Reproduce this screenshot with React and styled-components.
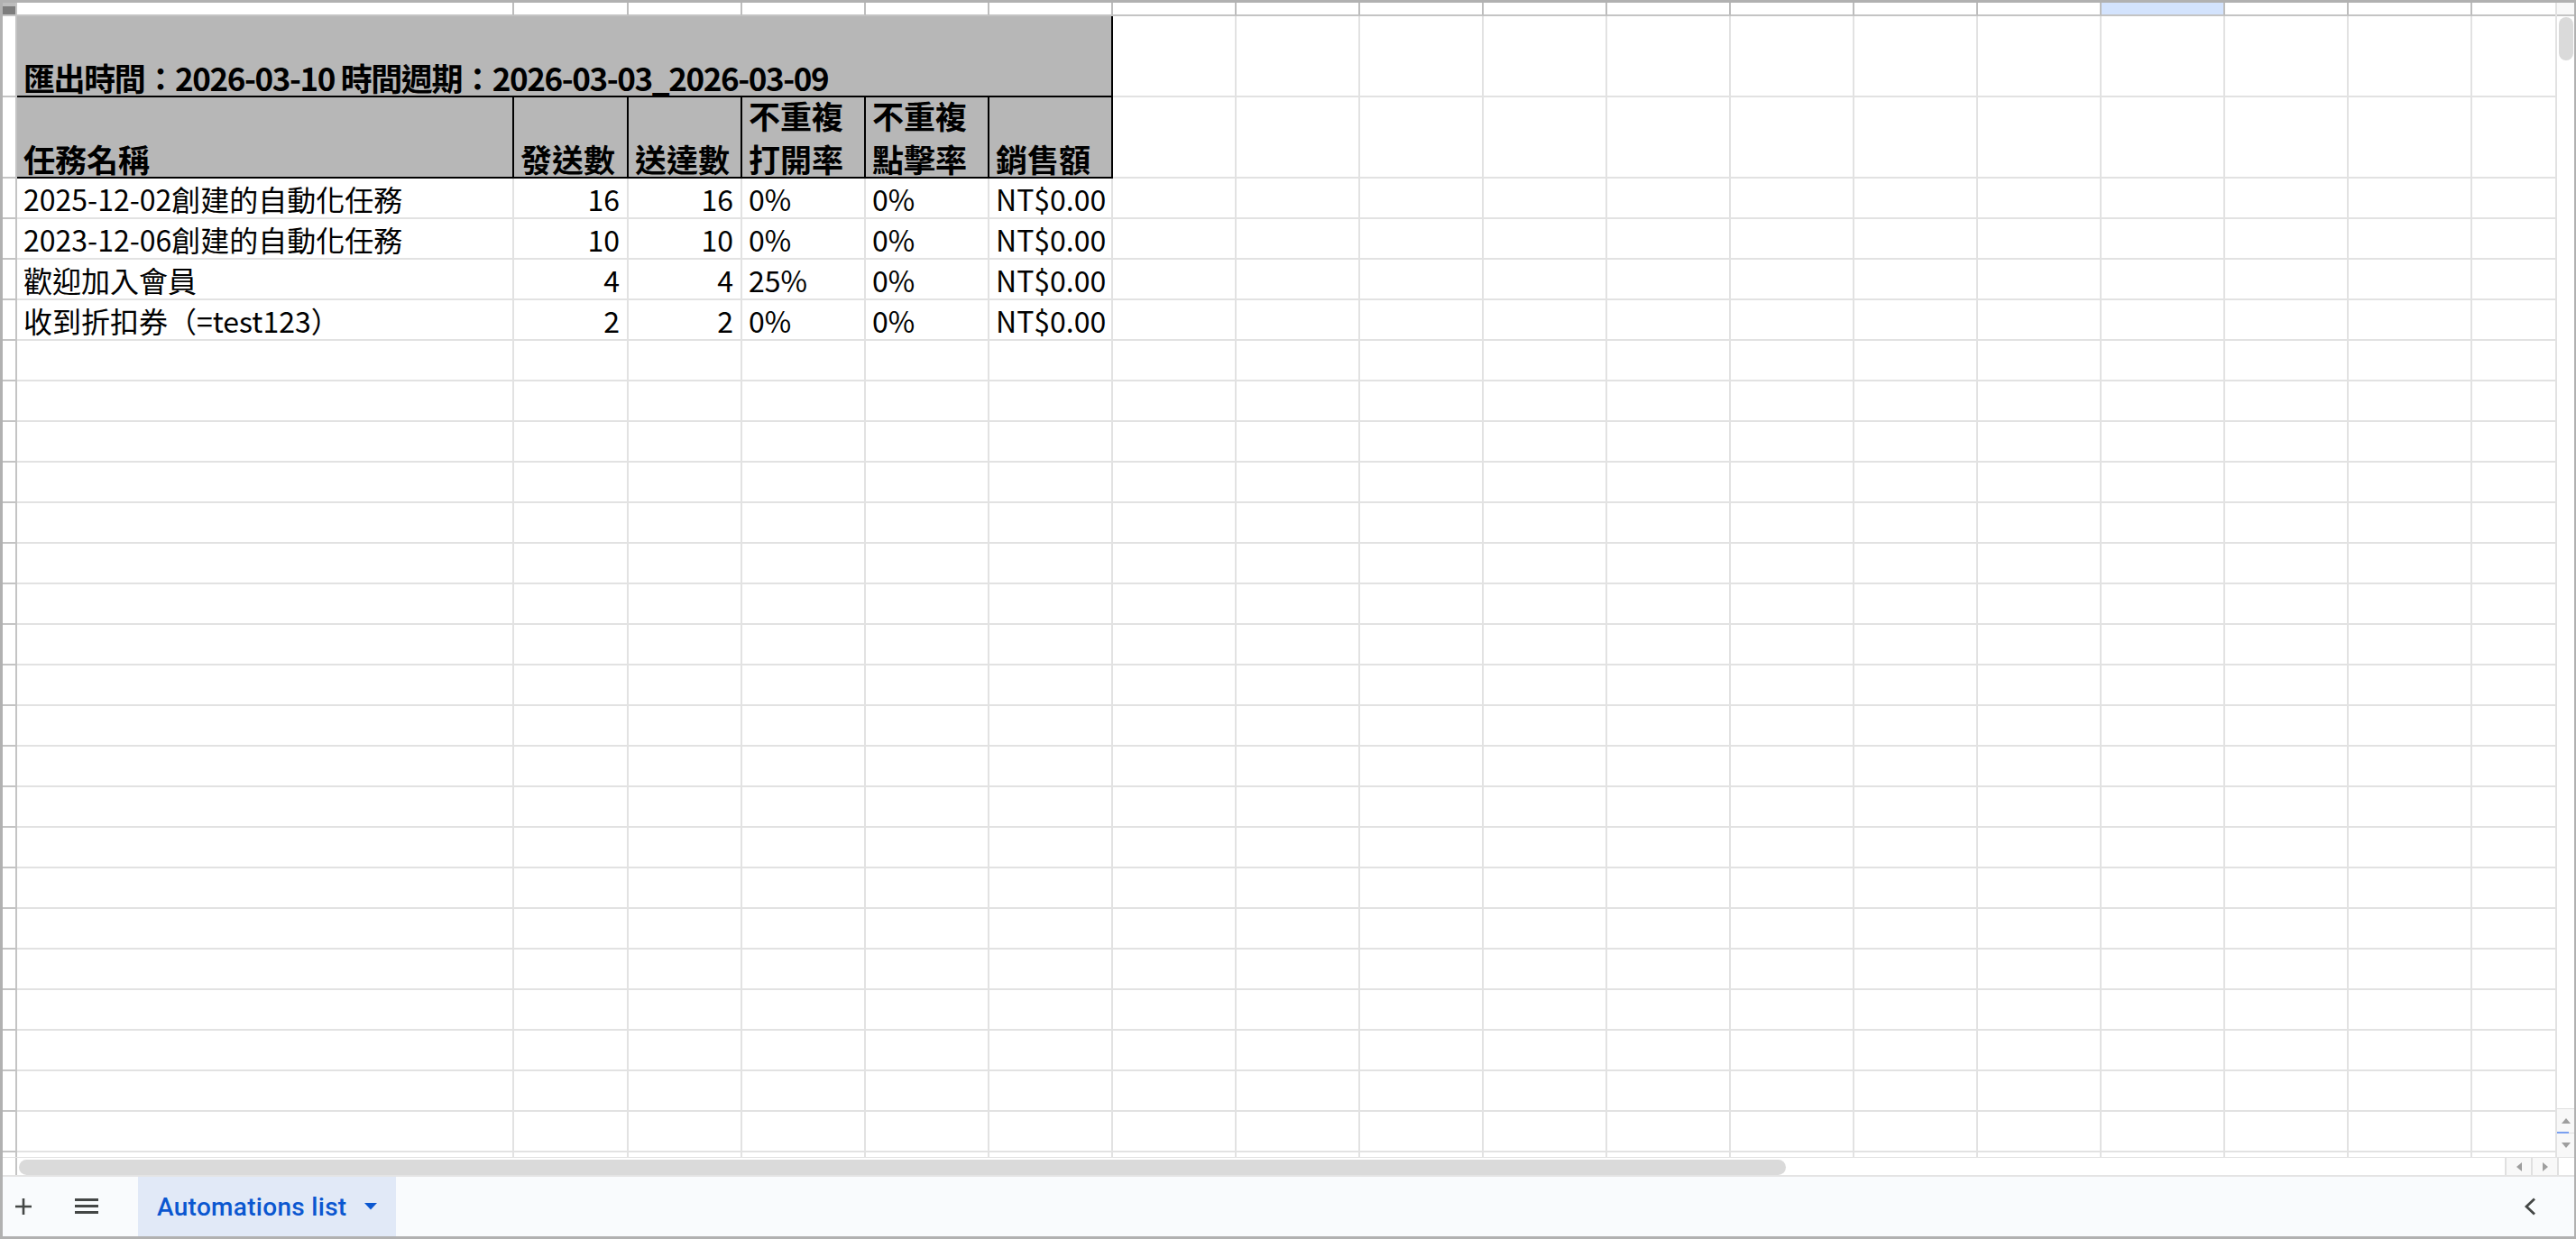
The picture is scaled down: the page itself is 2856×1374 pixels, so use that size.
import React from 'react';
import styled, { createGlobalStyle } from 'styled-components';

const GlobalStyle = createGlobalStyle`
    html, body {
        margin: 0;
        padding: 0;
        overflow: hidden;
        background: #ffffff;
    }
    * {
        box-sizing: border-box;
    }
`;

const GRID_LINE = '#e2e2e2';
const HEAD_LINE = '#c4c4c4';
const BLACK = '#000000';
const HEAD_BG = '#b7b7b7';

const COLS = [551, 127, 126, 137, 137, 137, 137, 137, 137, 137, 137, 137, 137, 137, 137, 137, 137, 137];
const SELECTED_COL = 14;

const ROWS = [
    ['2025-12-02創建的自動化任務', '16', '16', '0%', '0%', 'NT$0.00'],
    ['2023-12-06創建的自動化任務', '10', '10', '0%', '0%', 'NT$0.00'],
    ['歡迎加入會員', '4', '4', '25%', '0%', 'NT$0.00'],
    ['收到折扣券（=test123）', '2', '2', '0%', '0%', 'NT$0.00']
];
const EMPTY_ROWS = 21;

const Window = styled.div`
    width: 2856px;
    height: 1374px;
    border-style: solid;
    border-color: #b1b1b1;
    border-width: 3px 2px 3px 3px;
    display: flex;
    flex-direction: column;
    background: #ffffff;
    overflow: hidden;
`;

const SheetArea = styled.div`
    display: flex;
    height: 1280px;
    flex-shrink: 0;
`;

const Grid = styled.div`
    width: 2830px;
    overflow: hidden;
    display: flex;
    flex-direction: column;
`;

const Row = styled.div`
    display: flex;
    height: ${(p) => p.$h}px;
    flex-shrink: 0;
`;

const Corner = styled.div`
    width: 16px;
    flex-shrink: 0;
    background: #bdbdbd;
    border-right: 2px solid ${HEAD_LINE};
    border-bottom: 2px solid ${HEAD_LINE};
    display: flex;
    align-items: flex-end;
    &::after {
        content: '';
        display: block;
        width: 100%;
        height: 9px;
        background: #7d7d7d;
    }
`;

const ColHead = styled.div`
    width: ${(p) => p.$w}px;
    flex-shrink: 0;
    background: ${(p) => (p.$selected ? '#d3e3fd' : '#ffffff')};
    border-right: 2px solid #bdbdbd;
    border-bottom: 2px solid ${HEAD_LINE};
`;

const RowHead = styled.div`
    width: 16px;
    flex-shrink: 0;
    background: #ffffff;
    border-right: 2px solid ${HEAD_LINE};
    border-bottom: 2px solid ${HEAD_LINE};
`;

const Cell = styled.div`
    width: ${(p) => p.$w}px;
    flex-shrink: 0;
    display: flex;
    align-items: flex-end;
    justify-content: ${(p) => (p.$right ? 'flex-end' : 'flex-start')};
    padding: 0 8px 0 7px;
    background: ${(p) => p.$bg || '#ffffff'};
    border-right: 2px solid ${(p) => p.$rb || GRID_LINE};
    border-bottom: 2px solid ${(p) => p.$bb || GRID_LINE};
    font-family: 'Noto Sans CJK TC', 'Noto Sans', sans-serif;
    color: #000000;
    white-space: nowrap;
    overflow: visible;
`;

const DataText = styled.span`
    font-size: 32px;
    line-height: 40px;
    margin-bottom: 1px;
`;

const HeadText = styled.span`
    font-size: 35px;
    font-weight: 700;
    line-height: 48px;
    letter-spacing: ${(p) => (p.$tight ? '-1.4px' : '0')};
    margin-bottom: -4px;
`;

const VScroll = styled.div`
    width: 21px;
    flex-shrink: 0;
    border-left: 2px solid ${GRID_LINE};
    display: flex;
    flex-direction: column;
`;

const VCorner = styled.div`
    height: 15px;
    flex-shrink: 0;
    background: #f8f8f8;
    border-bottom: 2px solid ${HEAD_LINE};
`;

const VTrack = styled.div`
    flex: 1;
    padding: 1px 1px 0 2px;
`;

const VThumb = styled.div`
    width: 16px;
    height: 48px;
    border-radius: 8px;
    background: #dadada;
`;

const ArrowBox = styled.div`
    flex-shrink: 0;
    display: flex;
    align-items: center;
    justify-content: center;
    background: #f8f8f8;
    border-color: #e0e0e0;
    border-style: solid;
    border-width: ${(p) => (p.$vertical ? '1px 0 0 0' : '0 0 0 2px')};
    width: ${(p) => (p.$vertical ? '100%' : '29px')};
    height: ${(p) => (p.$vertical ? '27px' : '100%')};
    position: relative;
`;

const SelMark = styled.div`
    position: absolute;
    left: 0;
    top: -2px;
    width: 13px;
    height: 2px;
    background: #7aa0f0;
`;

const HScrollRow = styled.div`
    height: 22px;
    flex-shrink: 0;
    display: flex;
    border-top: 1px solid ${GRID_LINE};
    border-bottom: 2px solid #e4e4e4;
`;

const HStub = styled.div`
    width: 16px;
    flex-shrink: 0;
    border-right: 2px solid ${HEAD_LINE};
`;

const HTrack = styled.div`
    flex: 1;
    padding: 2px 0 0 2px;
`;

const HThumb = styled.div`
    width: 1959px;
    height: 17px;
    border-radius: 9px;
    background: #dadada;
`;

const HCorner = styled.div`
    width: 19px;
    flex-shrink: 0;
    border-left: 2px solid #e0e0e0;
`;

const TabBar = styled.div`
    flex: 1;
    display: flex;
    align-items: center;
    background: #f9fbfd;
    color: #444746;
`;

const IconSlot = styled.div`
    display: flex;
    align-items: center;
    margin-left: ${(p) => p.$ml}px;
    margin-right: ${(p) => p.$mr || 0}px;
`;

const SheetTab = styled.div`
    align-self: stretch;
    width: 286px;
    margin-left: 44px;
    padding: 0 21px;
    display: flex;
    align-items: center;
    justify-content: space-between;
    background: #e1e9f7;
    color: #0b57d0;
    font-family: Roboto, 'Noto Sans', sans-serif;
    font-size: 28px;
    font-weight: 500;
    letter-spacing: 0.3px;
`;

const Spacer = styled.div`
    flex: 1;
`;

const PlusIcon = () => (
    <svg width="20" height="20" viewBox="0 0 20 20">
        <path d="M10 1v18M1 10h18" stroke="#444746" strokeWidth="2.6" fill="none" />
    </svg>
);

const MenuIcon = () => (
    <svg width="26" height="18" viewBox="0 0 26 18">
        <rect x="0" y="0" width="26" height="3" fill="#444746" />
        <rect x="0" y="7" width="26" height="3" fill="#444746" />
        <rect x="0" y="14" width="26" height="3" fill="#444746" />
    </svg>
);

const Caret = () => (
    <svg width="14" height="8" viewBox="0 0 14 8">
        <path d="M0 0h14L7 7.5z" fill="#0b57d0" />
    </svg>
);

const Chevron = () => (
    <svg width="14" height="20" viewBox="0 0 14 20">
        <path d="M12 1.5L3 10l9 8.5" stroke="#444746" strokeWidth="2.8" fill="none" />
    </svg>
);

const Tri = ({ dir }) => {
    const paths = {
        up: 'M0 6L5 0l5 6z',
        down: 'M0 0h10L5 6z',
        left: 'M6 0v10L0 5z',
        right: 'M0 0l6 5-6 5z'
    };
    const vertical = dir === 'up' || dir === 'down';
    return (
        <svg width={vertical ? 10 : 6} height={vertical ? 6 : 10} viewBox={vertical ? '0 0 10 6' : '0 0 6 10'}>
            <path d={paths[dir]} fill="#9e9e9e" />
        </svg>
    );
};

const EmptyCells = ({ from }) =>
    COLS.slice(from).map((w, i) => <Cell key={from + i} $w={w} />);

const App = () => {
    return (
        <>
            <GlobalStyle />
            <Window>
                <SheetArea>
                    <Grid>
                        <Row $h={15}>
                            <Corner />
                            {COLS.map((w, i) => (
                                <ColHead key={i} $w={w} $selected={i === SELECTED_COL} />
                            ))}
                        </Row>

                        <Row $h={90}>
                            <RowHead />
                            <Cell $w={1215} $bg={HEAD_BG} $rb={BLACK} $bb={BLACK}>
                                <HeadText $tight>匯出時間：2026-03-10 時間週期：2026-03-03_2026-03-09</HeadText>
                            </Cell>
                            <EmptyCells from={6} />
                        </Row>

                        <Row $h={90}>
                            <RowHead />
                            <Cell $w={COLS[0]} $bg={HEAD_BG} $rb={BLACK} $bb={BLACK}>
                                <HeadText>任務名稱</HeadText>
                            </Cell>
                            <Cell $w={COLS[1]} $bg={HEAD_BG} $rb={BLACK} $bb={BLACK}>
                                <HeadText>發送數</HeadText>
                            </Cell>
                            <Cell $w={COLS[2]} $bg={HEAD_BG} $rb={BLACK} $bb={BLACK}>
                                <HeadText>送達數</HeadText>
                            </Cell>
                            <Cell $w={COLS[3]} $bg={HEAD_BG} $rb={BLACK} $bb={BLACK}>
                                <HeadText>
                                    不重複
                                    <br />
                                    打開率
                                </HeadText>
                            </Cell>
                            <Cell $w={COLS[4]} $bg={HEAD_BG} $rb={BLACK} $bb={BLACK}>
                                <HeadText>
                                    不重複
                                    <br />
                                    點擊率
                                </HeadText>
                            </Cell>
                            <Cell $w={COLS[5]} $bg={HEAD_BG} $rb={BLACK} $bb={BLACK}>
                                <HeadText>銷售額</HeadText>
                            </Cell>
                            <EmptyCells from={6} />
                        </Row>

                        {ROWS.map((r, ri) => (
                            <Row key={ri} $h={45}>
                                <RowHead />
                                {r.map((v, ci) => (
                                    <Cell key={ci} $w={COLS[ci]} $right={ci === 1 || ci === 2}>
                                        <DataText>{v}</DataText>
                                    </Cell>
                                ))}
                                <EmptyCells from={6} />
                            </Row>
                        ))}

                        {Array.from({ length: EMPTY_ROWS }).map((_, ri) => (
                            <Row key={'e' + ri} $h={45}>
                                <RowHead />
                                <EmptyCells from={0} />
                            </Row>
                        ))}
                    </Grid>

                    <VScroll>
                        <VCorner />
                        <VTrack>
                            <VThumb />
                        </VTrack>
                        <ArrowBox $vertical>
                            <Tri dir="up" />
                        </ArrowBox>
                        <ArrowBox $vertical>
                            <SelMark />
                            <Tri dir="down" />
                        </ArrowBox>
                    </VScroll>
                </SheetArea>

                <HScrollRow>
                    <HStub />
                    <HTrack>
                        <HThumb />
                    </HTrack>
                    <ArrowBox>
                        <Tri dir="left" />
                    </ArrowBox>
                    <ArrowBox>
                        <Tri dir="right" />
                    </ArrowBox>
                    <HCorner />
                </HScrollRow>

                <TabBar>
                    <IconSlot $ml={13}>
                        <PlusIcon />
                    </IconSlot>
                    <IconSlot $ml={47}>
                        <MenuIcon />
                    </IconSlot>
                    <SheetTab>
                        <span>Automations list</span>
                        <Caret />
                    </SheetTab>
                    <Spacer />
                    <IconSlot $ml={0} $mr={42}>
                        <Chevron />
                    </IconSlot>
                </TabBar>
            </Window>
        </>
    );
};

export default App;
